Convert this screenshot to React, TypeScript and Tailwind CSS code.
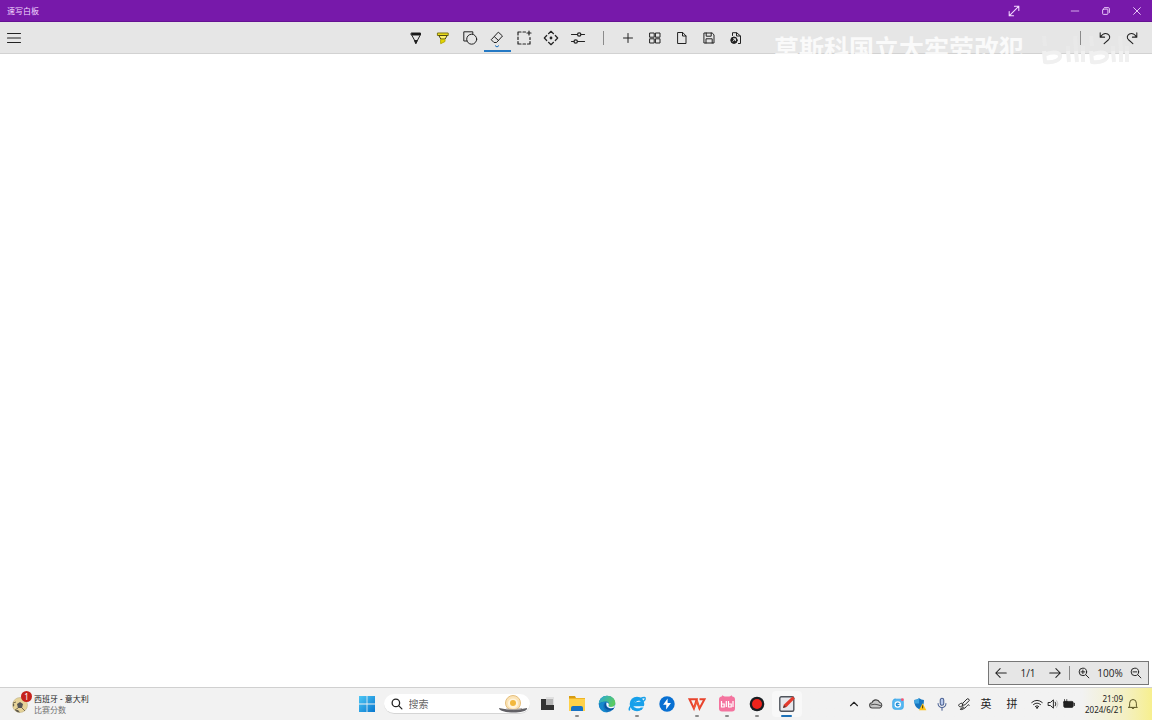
import type { ReactNode } from "react";

type IconProps = { children: ReactNode; size?: string; width?: number };

function Icon({ children, size = "size-4", width = 1 }: IconProps) {
  return (
    <svg viewBox="0 0 16 16" className={`${size} shrink-0`} fill="none" stroke="currentColor" strokeWidth={width} strokeLinecap="round" strokeLinejoin="round" aria-hidden="true">
      {children}
    </svg>
  );
}

type Item = { label: string; icon: ReactNode; active?: boolean; running?: boolean };

const drawTools: Item[] = [
  { label: "笔", icon: <Icon><path d="M3.5 3h9v2h-9z" fill="#111" /><path d="M4 5.5 8 13l4-7.5" /><path d="M6.8 10.5h2.4L8 13.5z" fill="#111" /></Icon> },
  { label: "荧光笔", icon: <Icon><path d="M2.8 3h10.4v2.5H2.8z" fill="#f2e21b" stroke="#7d7410" /><path d="M4 5.8 5.8 9h4.4L12 5.8z" fill="#fff36b" stroke="#4f4a15" /><path d="M6 9.4h4v2.1l-4 2z" fill="#e5d500" stroke="#b5aa08" /></Icon> },
  { label: "形状", icon: <Icon><path d="M5 11H1.8V1.8h9V4" /><circle cx="9.7" cy="9.2" r="5" /></Icon> },
  { label: "橡皮擦", active: true, icon: <Icon><path d="M9.6 2.4 13.5 6 7.5 12.5H5L2.5 10z M5.5 6.8l4 3.7" /></Icon> },
  { label: "选择", icon: <Icon width={1.2}><path d="M2 5V2h3M7 2h2.5M2 7.2v2.2M2 11.5V14h3M7 14h2.5M11.5 14H14v-2.5M14 7.5v2M13 1v4M11 3h4" /></Icon> },
  { label: "移动", icon: <Icon width={1.2}><path d="m5.5 3.7 2.5-2.4 2.5 2.4M5.5 12.3 8 14.7l2.5-2.4M3.7 5.5 1.3 8l2.4 2.5M12.3 5.5 14.7 8l-2.4 2.5" /><circle cx="8" cy="8" r=".8" fill="currentColor" /></Icon> },
  { label: "设置", icon: <Icon width={1.2}><path d="M1.5 4.5h6M11 4.5h3.5M1.5 11.5H4M7.5 11.5h7" /><circle cx="9.2" cy="4.5" r="1.7" /><circle cx="5.7" cy="11.5" r="1.7" /></Icon> },
];

const pageTools: Item[] = [
  { label: "添加页面", icon: <Icon><path d="M8 3.5v9M3.5 8h9" /></Icon> },
  { label: "所有页面", icon: <Icon><path d="M3 3h4.2v4.2H3zM8.8 3H13v4.2H8.8zM3 8.8h4.2V13H3zM8.8 8.8H13V13H8.8z" /></Icon> },
  { label: "新建", icon: <Icon><path d="M4 2.5h4.8L12 6v7.5H4zM8.5 2.7V6H12" /></Icon> },
  { label: "保存", icon: <Icon><path d="M3.3 3h7.9L13 4.8V13H3.3zM5.2 3v3.2h5V3M5 13V8.8h6.2V13" /></Icon> },
  { label: "导出", icon: <Icon><path d="M4.5 5.5V2.7h4.2L12.5 6v7.5H10.5M8.5 3v3h4" /><circle cx="6" cy="10.2" r="3.2" fill="#222" /><path d="m5 11.2 2.2-2.2M5.5 8.8h1.9v1.9" stroke="#fff" strokeWidth={0.9} /></Icon> },
];

function ToolButton({ label, icon, active }: Item) {
  return (
    <button type="button" aria-label={label} aria-pressed={active} className="relative flex h-7 w-[27px] items-center justify-center text-[#222]">
      {icon}
      {active && (
        <>
          <svg viewBox="0 0 6 3" className="absolute bottom-1 h-[3px] w-1.5" fill="none" stroke="#1a6fbd" aria-hidden="true"><path d="m1 .5 2 1.5 2-1.5" /></svg>
          <span className="absolute inset-x-0 bottom-0 h-0.5 bg-[#2479c4]" />
        </>
      )}
    </button>
  );
}

const appItems: Item[] = [
  { label: "任务视图", icon: <svg viewBox="0 0 20 20" className="size-5"><path d="M9 3h8v8H9z" fill="#e0e0e0" /><path d="M4 5h5v6h8v5H4z" fill="#333" /><path d="M9 5h7v6H9z" fill="#b5b5b5" /></svg> },
  { label: "文件资源管理器", running: true, icon: <svg viewBox="0 0 20 20" className="size-5"><path d="M2 2h6l1 2H2z" fill="#d79c13" /><path d="M2 4h16v13H2z" fill="#ffd149" /><path d="M2 4h16v1H2z" fill="#efb526" /><path d="M4 17v-3q0-2 2-2h8q2 0 2 2v3z" fill="#1772c5" /></svg> },
  { label: "Microsoft Edge", icon: <svg viewBox="0 0 20 20" className="size-5"><defs><linearGradient id="edge" x1="0" y1="0" x2="1" y2="0.4"><stop stopColor="#27a9dc" /><stop offset="1" stopColor="#59ca62" /></linearGradient></defs><circle cx="10" cy="10" r="8.3" fill="#1272bd" /><path d="M1.8 10C2 4.7 5.5 1.7 10 1.7c5.2 0 8.3 3.5 8.3 7.2 0 2.6-2 4.2-4.3 4.2-2 0-3-.8-2.2-2 .9-1.5-.3-3.5-3-3.5-3 0-6 1-7 2.4z" fill="url(#edge)" /><path d="M8.4 8c-3.7 2.8-2 8.3 2.1 10.2-5 .5-8.5-3.4-8.4-7.3C3.5 8.1 6 7.4 8.4 8z" fill="#1689cd" /><path d="M9.5 8.4c-2 3 .5 6.2 4 6.1 1.6 0 2.8-.6 3.8-1.2l-1 2c-3 1.5-8.6.7-8.8-3.7 0-1.6.8-2.8 2-3.2z" fill="#0b4f9b" /><path d="M9.5 8.4c1.6.2 2.7 1.2 2.3 2.6-.8 1.2.2 2 2.2 2 1.6 0 3.2-.7 3.9-2 0 1-.2 1.7-.6 2.4-2.7 1.8-9 .8-7.8-5z" fill="#f3fafc" /></svg> },
  { label: "浏览器", running: true, icon: <svg viewBox="0 0 20 20" className="size-5"><circle cx="10" cy="10" r="7.3" fill="#18a0ea" /><path d="M6.3 8.8c2-2.4 5.6-3 7.6-1.4-2.400.2-5 .6-7.600 1.400z" fill="#f2f9fd" /><path d="M6.300 12.200h11.500v1.200h-4c-2 1.500-5.500 1-7.500-1.200z" fill="#f2f9fd" /><path d="M2.600 16.500C1 14 5 9.500 10 6.500c4-2.500 8-4 8.300-2.300.2 1-.8 2.300-2 3.300" fill="none" stroke="#18a0ea" strokeWidth="1.400" /></svg> },
  { label: "迅雷", icon: <svg viewBox="0 0 20 20" className="size-5"><circle cx="10" cy="10" r="7.7" fill="#0870d2" /><path d="m10.600 4.500-4.500 6.200h3.200l-.2 4.800 4.900-6.500h-3.400z" fill="#fff" /></svg> },
  { label: "WPS Office", running: true, icon: <svg viewBox="0 0 20 20" className="size-5"><path d="M2.500 5.200h7.200L6.900 14.500zm8 3.800 2 5.500L17.500 5.200h-5" fill="none" stroke="#e8432c" strokeWidth="2" /><path d="m6.900 14.500 3.400-7.500 2.200 7.500" fill="none" stroke="#f05b37" strokeWidth="1.600" /></svg> },
  { label: "哔哩哔哩", running: true, icon: <svg viewBox="0 0 20 20" className="size-5"><rect x="2" y="2.500" width="16" height="15" rx="3" fill="#f4749f" /><path d="m5 1.800 2.500 2h5l2.500-2" fill="none" stroke="#f4749f" strokeWidth="1.500" /><path d="M4.500 7v6h2.700v-3H4.500M9.300 7v6M11.500 7v6h2.700v-3h-2.700M16 7v6" fill="none" stroke="#fff" strokeWidth="1.200" /></svg> },
  { label: "录屏", running: true, icon: <svg viewBox="0 0 20 20" className="size-5"><circle cx="10" cy="10" r="7.300" fill="#191d21" /><circle cx="10" cy="10" r="5" fill="#ed231b" /></svg> },
  { label: "速写白板", active: true, icon: <svg viewBox="0 0 20 20" className="size-5"><rect x="2.800" y="2.800" width="14" height="14.400" rx="1.500" fill="#e8e8ec" stroke="#50545c" strokeWidth="1.400" /><path d="m6 14 1-3.500 8.500-8 2.300 2-8.300 8.500z" fill="#e43a2d" /><path d="m6 14 1-3 2 2z" fill="#4d3d38" /></svg> },
];

const trayItems: Item[] = [
  { label: "显示隐藏的图标", icon: <Icon size="size-3.5" width={1.3}><path d="m4 10 4-4 4 4" /></Icon> },
  { label: "OneDrive", icon: <Icon size="size-3.5" width={1.2}><path d="M4 12.5a3 3 0 0 1-.5-6 4.6 4.6 0 0 1 8.6-.5 3.4 3.4 0 0 1 .3 6.5z" fill="#c8c8c8" stroke="#444" /><path d="M2.5 9q5-2 11 1" stroke="#555" /></Icon> },
  { label: "应用", icon: <Icon size="size-3.5"><rect x="2" y="2.5" width="12" height="11.5" rx="2.5" fill="#58b8f1" stroke="#38a7ea" /><circle cx="7.7" cy="8.5" r="3" stroke="#fff" fill="#218ed7" strokeWidth={1.3} /><path d="M8 8.5h3" stroke="#fff" /><circle cx="13" cy="3" r="1.7" fill="#ef5775" stroke="none" /></Icon> },
  { label: "Windows 安全中心", icon: <Icon size="size-3.5"><path d="M7 1.5q2.5 2 5.5 2c0 5-1 8-5.5 10.5-4.500-2.500-5.500-5.500-5.500-10.500q3 0 5.500-2z" fill="#1876bf" stroke="none" /><path d="M7 1.500v6H1.700C1.500 6 1.500 5 1.500 3.500q3 0 5.500-2z" fill="#3fa5e0" stroke="none" /><path d="m11 7 4.300 8H6.700z" fill="#ffc41b" stroke="none" /><path d="M11 10v2.500" stroke="#332600" /></Icon> },
  { label: "麦克风", icon: <Icon size="size-3.5" width={1.2}><g stroke="#485e91"><rect x="6" y="1.500" width="4" height="8" rx="2" fill="#b9caec" /><path d="M3.500 7.500a4.500 4.500 0 0 0 9 0M8 12v3" /></g></Icon> },
  { label: "笔菜单", icon: <Icon size="size-3.5" width={1.1}><path d="m6 9.500.7-2.500 5-5q2-.5 2.300 2L9 9l-3 .5M5.500 7C2 7.500.8 10 3 11c2 .8 3.500-.3 4.300.5 1 1.200-4.300 1.500-3.500 2.700.8 1 5.200-1 7.200-3.500 1.500-2 3-2.500 3-1.200" /></Icon> },
];

export default function App() {
  return (
    <div className="flex h-screen flex-col overflow-hidden bg-white font-['Noto_Sans','Noto_Sans_CJK_SC',sans-serif] text-[#222]">
      <header className="flex h-[22px] shrink-0 items-center justify-between border-b border-[#651292] bg-[#7719aa] text-[#f3d9ff]">
        <h1 className="pl-[7px] text-[8px] leading-3">速写白板</h1>
        <div className="flex">
          <button type="button" aria-label="全屏" className="mr-[30px] flex h-5 w-[31px] items-center justify-center"><Icon size="size-3.5" width={1.2}><path d="m2.500 13.500 11-11M8.500 2.500h5v5M2.500 8.500v5h5" /></Icon></button>
          <button type="button" aria-label="最小化" className="flex h-5 w-[31px] items-center justify-center"><Icon size="size-3"><path d="M3 8h10" /></Icon></button>
          <button type="button" aria-label="还原" className="flex h-5 w-[31px] items-center justify-center"><Icon size="size-3" width={1.2}><rect x="3.500" y="5.500" width="7" height="7" rx="1" /><path d="M6 3.500h5q1.500 0 1.500 1.500v5" /></Icon></button>
          <button type="button" aria-label="关闭" className="flex h-5 w-[31px] items-center justify-center"><Icon size="size-3" width={1.2}><path d="m3.500 3.500 9 9M12.500 3.500l-9 9" /></Icon></button>
        </div>
      </header>

      <nav aria-label="工具栏" className="relative z-10 grid h-8 shrink-0 grid-cols-[1fr_auto_1fr] items-center border-b border-[#d2d2d2] bg-[#e6e6e6]">
        <button type="button" aria-label="菜单" className="flex size-7 items-center justify-center"><Icon width={1.1}><path d="M1.500 3.500h13M1.500 8h13M1.500 12.500h13" /></Icon></button>
        <div className="flex items-center">
          {drawTools.map((t) => <ToolButton key={t.label} {...t} />)}
          <span className="mx-[11px] h-3.5 w-px bg-[#8b8b8b]" />
          {pageTools.map((t) => <ToolButton key={t.label} {...t} />)}
        </div>
        <div className="z-10 flex items-center justify-end pr-[7px]">
          <span className="mr-2.5 h-3.5 w-px bg-[#8b8b8b]" />
          <ToolButton label="撤销" icon={<Icon size="size-3.5" width={1.2}><path d="M2.500 2v5h5M2.500 7C5 3.500 8 2 11 3.500c3 1.800 3 4.500 1 6.500l-5 4.500" /></Icon>} />
          <ToolButton label="重做" icon={<Icon size="size-3.5" width={1.2}><path d="M13.500 2v5h-5M13.500 7C11 3.500 8 2 5 3.500c-3 1.800-3 4.500-1 6.500l5 4.500" /></Icon>} />
        </div>
        <div className="pointer-events-none absolute top-3 right-[22px] flex items-start gap-4 text-white">
          <span className="text-[25px] leading-7 font-bold opacity-80">莫斯科国立大牢劳改犯</span>
          <svg viewBox="0 0 90 40" className="-mt-2 h-10 w-[90px]" fill="none" strokeWidth="4" strokeLinejoin="round" aria-hidden="true">
            <path d="m4 10 1 10M28 20v5M35 10l1 15M43 20v5M51 10l1 10M73 20v5M80 10l1 15M87 20v5" stroke="#e9e9e9" />
            <path d="m4 25 1 11c9 1 16-2 15-7-2-3-8-3-14-1M28 25l1 11M36 25l1 11M43 25v11M51 25l1 11c9 1 16-2 15-7-2-3-8-3-14-1M73 25l1 11M81 25v11M87 25v11" stroke="#f0f0f0" />
          </svg>
        </div>
      </nav>

      <main className="relative min-h-0 flex-1 bg-white">
        <div className="absolute right-[3px] bottom-0.5 flex h-6 items-center border border-[#777] bg-[#e6e6e6] font-['Open_Sans',sans-serif] text-[10px] leading-4">
          <button type="button" aria-label="上一页" className="flex w-6 justify-center"><Icon size="size-3.5" width={1.2}><path d="M14 8H2M7 3 2 8l5 5" /></Icon></button>
          <span className="w-[30px] text-center">1/1</span>
          <button type="button" aria-label="下一页" className="flex w-6 justify-center"><Icon size="size-3.5" width={1.2}><path d="M2 8h12M9 3l5 5-5 5" /></Icon></button>
          <span className="mx-0.5 h-3.5 w-px bg-[#888]" />
          <button type="button" aria-label="放大" className="flex w-6 justify-center"><Icon size="size-3" width={1.3}><circle cx="6.500" cy="6.500" r="5" /><path d="m10.500 10.500 4 4M4 6.500h5M6.500 4v5" /></Icon></button>
          <span className="w-7 text-center">100%</span>
          <button type="button" aria-label="缩小" className="flex w-6 justify-center"><Icon size="size-3" width={1.3}><circle cx="6.500" cy="6.500" r="5" /><path d="m10.500 10.500 4 4M4 6.500h5" /></Icon></button>
        </div>
      </main>

      <footer className="grid h-[33px] shrink-0 grid-cols-[1fr_auto_1fr] items-center border-t border-[#d0d0d0] bg-[#f2f2f2]">
        <button type="button" className="flex items-center gap-1 justify-self-start pl-3 text-left">
          <span className="relative flex size-[18px] items-end">
            <svg viewBox="0 0 16 16" className="size-4" aria-hidden="true"><circle cx="8" cy="8" r="7.500" fill="#e6d398" stroke="#b7aa83" strokeWidth=".5" /><path d="m8 5 3 2-1 4H6L5 7z" fill="#555" /><path d="M1 6l3-1M3 13l3-2M10 11l3 3" stroke="#776c50" /><path d="m3 13 2 2 3 .500-2-2.500zM1 6v4l1.500-2z" fill="#625c4d" /></svg>
            <span className="absolute -top-1 -right-0.5 flex size-[11px] items-center justify-center rounded-full bg-[#c5221c] text-[8px] leading-none text-white">1</span>
          </span>
          <span className="flex flex-col text-[8px] leading-[11px]"><span>西班牙 - 意大利</span><span className="text-[#707070]">比赛分数</span></span>
        </button>

        <div className="flex items-center pl-px">
          <button type="button" aria-label="开始" className="flex w-[30px] items-center justify-center">
            <svg viewBox="0 0 16 16" className="size-4"><defs><linearGradient id="win" x1="0" y1="0" x2="1" y2="1"><stop stopColor="#4dc7f5" /><stop offset="1" stopColor="#0877cf" /></linearGradient></defs><path d="M0 0h7.600v7.600H0zM8.400 0H16v7.600H8.400zM0 8.400h7.600V16H0zM8.400 8.400H16V16H8.400z" fill="url(#win)" /></svg>
          </button>
          <label className="mx-0.5 flex h-5 w-[146px] items-center rounded-full border-b border-[#d5d5d5] bg-white pl-[7px]">
            <Icon size="size-3" width={1.7}><circle cx="6.500" cy="6.500" r="5" /><path d="m10.500 10.500 4 4" /></Icon>
            <input aria-label="搜索" placeholder="搜索" className="ml-1.5 min-w-0 flex-1 bg-transparent text-[10px] leading-4 outline-none placeholder:text-[#666]" />
            <svg viewBox="0 0 30 18" className="mr-0.5 h-[18px] w-[30px]" aria-hidden="true"><circle cx="15" cy="8" r="7.500" fill="#fbe3b5" stroke="#e5be7c" /><circle cx="15" cy="8.500" r="5" fill="#fff4dc" /><circle cx="15" cy="8" r="3" fill="#f2b83d" /><path d="M1 13q14 3 28 0c1 3-7 4.500-13 4.500S1 16.500 1 13z" fill="#626166" /><path d="M8 14q8 1.500 16-.500" stroke="#aaa4a0" fill="none" /></svg>
          </label>
          {appItems.map(({ label, icon, active, running }) => (
            <button key={label} type="button" aria-label={label} className={`relative flex h-[26px] w-[30px] items-center justify-center rounded ${active ? "bg-[#f8f8f8]" : ""}`}>
              {icon}
              {running && <span className="absolute bottom-0 h-0.5 w-1 rounded-full bg-[#8b8b8b]" />}
              {active && <span className="absolute bottom-0 h-0.5 w-[11px] rounded-full bg-[#1c70b7]" />}
            </button>
          ))}
        </div>

        <div className="flex h-full items-center justify-end bg-linear-to-l from-[#f7ef8e] via-[#f4f0c4] via-[8%] to-[#f2f2f2] to-[20%] pr-[13px]">
          {trayItems.map(({ label, icon }) => <button key={label} type="button" aria-label={label} className="flex w-[22px] items-center justify-center">{icon}</button>)}
          <button type="button" className="w-[22px] text-[11px] leading-4">英</button>
          <button type="button" className="w-[30px] text-[11px] leading-4">拼</button>
          <button type="button" aria-label="网络、音量和电池" className="flex items-center gap-1 px-1">
            <Icon size="size-3" width={1.3}><path d="M1 6q7-6 14 0M3.300 8.700q4.700-4 9.400 0M5.700 11.200q2.300-2 4.600 0" /><circle cx="8" cy="13" r=".8" fill="currentColor" /></Icon>
            <Icon size="size-3" width={1.3}><path d="M2 6h2.500L8.500 2.500v11L4.500 10H2zM11 5.500q2 2.500 0 5" /><path d="M13 3.500q3.500 4.500 0 9" stroke="#bbb" /></Icon>
            <Icon size="size-3"><rect x="1" y="4.500" width="12.500" height="8" rx="1.500" fill="#222" /><path d="M15 7v3" strokeWidth={1.5} /><path d="M2 2v3M5 2v3M1 5h5v2L3.500 9z" fill="#222" /></Icon>
          </button>
          <button type="button" className="ml-1.5 flex flex-col text-right text-[8px] leading-[11px]"><span className="w-full">21:09</span><span>2024/6/21</span></button>
          <button type="button" aria-label="通知" className="ml-1 flex justify-center text-[#575221]"><Icon size="size-3" width={1.3}><path d="M3.500 11V7q0-5 4.500-5t4.500 5v4l1.300 1.500H2.200zM6 13q2 3 4 0" /></Icon></button>
        </div>
      </footer>
    </div>
  );
}
